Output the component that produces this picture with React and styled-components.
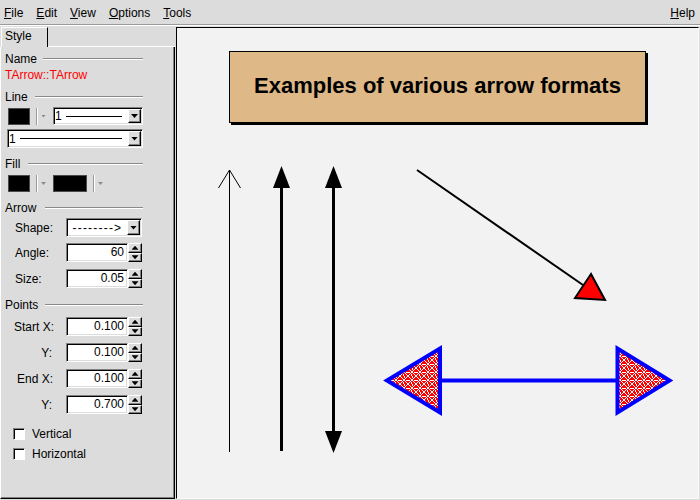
import React from "react";
import styled, { createGlobalStyle } from "styled-components";

const GlobalStyle = createGlobalStyle`
  html, body {
    margin: 0;
    padding: 0;
  }
  body {
    width: 700px;
    height: 500px;
    overflow: hidden;
    background: #dcdcdc;
    font-family: "Liberation Sans", Arial, sans-serif;
    font-size: 12px;
    color: #000;
  }
`;

const Window = styled.div`
  width: 700px;
  height: 500px;
  display: flex;
  flex-direction: column;
  background: #dcdcdc;
`;

const MenuBar = styled.div`
  height: 25px;
  box-sizing: border-box;
  padding: 2px 5px 0 4px;
  display: flex;
  align-items: center;
  gap: 13px;
  line-height: 14px;
  border-bottom: 1px solid #9a9a9a;
  box-shadow: 0 1px 0 #fff;
  margin-bottom: 1px;
  flex: none;
`;

const MenuItem = styled.span`
  margin-left: ${p => (p.$right ? "auto" : "0")};
  u {
    text-decoration: underline;
    text-underline-offset: 1px;
  }
`;

const Body = styled.div`
  flex: 1;
  display: flex;
  min-height: 0;
`;

const SidePanel = styled.div`
  width: 175px;
  flex: none;
  display: flex;
  flex-direction: column;
`;

const TabRow = styled.div`
  height: 21px;
  flex: none;
  display: flex;
  align-items: flex-end;
`;

const Tab = styled.div`
  box-sizing: border-box;
  height: 20px;
  width: 47px;
  margin-left: 1px;
  padding-left: 3px;
  line-height: 16px;
  border-top: 1px solid #fff;
  border-left: 1px solid #fff;
  border-right: 1px solid #000;
`;

const TabFill = styled.div`
  flex: 1;
  height: 1px;
  background: #fff;
`;

const TabBody = styled.div`
  flex: 1;
  margin-bottom: 1px;
  padding: 5px 31px 0 4px;
  border-left: 1px solid #fff;
  border-right: 1px solid #000;
  border-bottom: 1px solid #000;
  box-shadow: inset -1px -1px 0 #808080;
  display: flex;
  flex-direction: column;
`;

const SectionHead = styled.div`
  display: flex;
  align-items: center;
  height: 14px;
  line-height: 14px;
  margin-top: ${p => p.$mt || 0}px;
`;

const Rule = styled.div`
  flex: 1;
  margin-left: ${p => p.$gap}px;
  border-top: 1px solid #8a8a8a;
  border-bottom: 1px solid #fff;
`;

const NameValue = styled.div`
  margin-top: 2px;
  line-height: 14px;
  color: #ff0000;
`;

const ToolRow = styled.div`
  display: flex;
  align-items: center;
  height: ${p => p.$h}px;
  margin-top: ${p => p.$mt}px;
`;

const ColorPickWrap = styled.div`
  display: flex;
  align-items: center;
  margin-left: ${p => p.$ml}px;
`;

const Swatch = styled.div`
  box-sizing: border-box;
  width: ${p => p.$w}px;
  height: 17px;
  background: #000;
  border: 1px solid #4a4a4a;
`;

const VSep = styled.div`
  width: 0;
  height: 17px;
  margin-left: 6px;
  border-left: 1px solid #9a9a9a;
  border-right: 1px solid #fff;
`;

const SmallTri = styled.div`
  width: 5px;
  height: 3px;
  margin-left: 3px;
  background: #8c8c8c;
  clip-path: polygon(0 0, 100% 0, 50% 100%);
`;

const Sunken = styled.div`
  box-sizing: border-box;
  background: #fff;
  border: 1px solid;
  border-color: #808080 #fff #fff #808080;
  box-shadow: inset 1px 1px 0 #000, inset -1px -1px 0 #dcdcdc;
`;

const Combo = styled(Sunken)`
  display: flex;
  align-items: stretch;
  height: ${p => p.$h}px;
  flex: ${p => (p.$w ? "none" : "1")};
  width: ${p => (p.$w ? `${p.$w}px` : "auto")};
  margin-left: ${p => p.$ml || 0}px;
  padding: 1px;
`;

const ComboText = styled.div`
  flex: 1;
  display: flex;
  align-items: center;
  line-height: 14px;
  white-space: pre;
  letter-spacing: ${p => p.$ls || 0}px;
`;

const LineSample = styled.div`
  flex: 1;
  height: 1px;
  background: #000;
  margin: 0 6px 0 4px;
`;

const RaisedBtn = styled.div`
  box-sizing: border-box;
  background: #dcdcdc;
  border-top: 1px solid #fff;
  border-left: 1px solid #fff;
  border-right: 1px solid #000;
  border-bottom: 1px solid #000;
  box-shadow: inset -1px -1px 0 #808080;
  display: flex;
  align-items: center;
  justify-content: center;
`;

const DropBtn = styled(RaisedBtn)`
  width: 13px;
  flex: none;
`;

const Tri = styled.div`
  width: 7px;
  height: 4px;
  background: #000;
  clip-path: ${p =>
    p.$up
      ? "polygon(50% 0, 100% 100%, 0 100%)"
      : "polygon(0 0, 100% 0, 50% 100%)"};
`;

const FormRow = styled.div`
  display: flex;
  align-items: center;
  height: 19px;
  margin-top: ${p => p.$mt}px;
`;

const FieldLabel = styled.div`
  box-sizing: border-box;
  width: 61px;
  flex: none;
  line-height: 14px;
  padding-left: ${p => p.$pl || 0}px;
  padding-right: ${p => p.$pr || 0}px;
  text-align: ${p => (p.$right ? "right" : "left")};
`;

const NumEntry = styled(Sunken)`
  width: 62px;
  height: 19px;
  flex: none;
  padding-right: 3px;
  line-height: 17px;
  text-align: right;
`;

const Spin = styled.div`
  width: 14px;
  height: 19px;
  flex: none;
  display: flex;
  flex-direction: column;
`;

const SpinBtn = styled(RaisedBtn)`
  flex: 1;
`;

const CheckRow = styled.div`
  display: flex;
  align-items: center;
  height: 14px;
  line-height: 14px;
  margin-top: ${p => p.$mt}px;
  padding-left: 8px;
`;

const CheckBox = styled(Sunken)`
  width: 12px;
  height: 12px;
  flex: none;
  box-shadow: inset 1px 1px 0 #000;
`;

const CheckLabel = styled.span`
  margin-left: 7px;
`;

const CanvasFrame = styled.div`
  position: relative;
  flex: 1;
  margin: 1px;
  background: #f2f2f2;
  border-top: 1px solid #000;
  border-left: 1px solid #000;
  border-right: 1px solid #fafafa;
  border-bottom: 1px solid #fafafa;
  overflow: hidden;
`;

const Drawing = styled.svg`
  display: block;
  width: 100%;
  height: 100%;
`;

const TitleBox = styled.div`
  position: absolute;
  left: 52px;
  top: 23px;
  width: 417px;
  height: 72px;
  box-sizing: border-box;
  padding-bottom: 3px;
  background: #deb887;
  border: 1px solid #000;
  box-shadow: 2px 2px 0 #000;
  display: flex;
  align-items: center;
  justify-content: center;
  font-family: "Liberation Sans", Arial, sans-serif;
  font-weight: bold;
  font-size: 22px;
  color: #000;
`;

const ColorPick = ({ w, ml }) => (
  <ColorPickWrap $ml={ml}>
    <Swatch $w={w} />
    <VSep />
    <SmallTri />
  </ColorPickWrap>
);

const LineCombo = ({ h, ml }) => (
  <Combo $h={h} $ml={ml}>
    <ComboText>
      1<LineSample />
    </ComboText>
    <DropBtn>
      <Tri />
    </DropBtn>
  </Combo>
);

const NumberField = ({ value }) => (
  <>
    <NumEntry>{value}</NumEntry>
    <Spin>
      <SpinBtn>
        <Tri $up />
      </SpinBtn>
      <SpinBtn>
        <Tri />
      </SpinBtn>
    </Spin>
  </>
);

const menus = ["File", "Edit", "View", "Options", "Tools"];

const points = [
  { label: "Start X:", pr: 12, value: "0.100", mt: 5 },
  { label: "Y:", pr: 14, value: "0.100", mt: 7 },
  { label: "End X:", pr: 13, value: "0.100", mt: 7 },
  { label: "Y:", pr: 14, value: "0.700", mt: 7 },
];

// white lattice over red, reads like the woven hatch in the picture
const weaveSteps = [0, 1, 2, 3, 4, 5, 6, 7];

export default function App() {
  return (
    <Window>
      <GlobalStyle />
      <MenuBar>
        {menus.map(m => (
          <MenuItem key={m}>
            <u>{m[0]}</u>
            {m.slice(1)}
          </MenuItem>
        ))}
        <MenuItem $right>
          <u>H</u>elp
        </MenuItem>
      </MenuBar>
      <Body>
        <SidePanel>
          <TabRow>
            <Tab>Style</Tab>
            <TabFill />
          </TabRow>
          <TabBody>
            <SectionHead>
              Name
              <Rule $gap={6} />
            </SectionHead>
            <NameValue>TArrow::TArrow</NameValue>

            <SectionHead $mt={8}>
              Line
              <Rule $gap={7} />
            </SectionHead>
            <ToolRow $mt={3} $h={18}>
              <ColorPick w={22} ml={3} />
              <LineCombo h={18} ml={7} />
            </ToolRow>
            <ToolRow $mt={4} $h={19}>
              <LineCombo h={19} ml={2} />
            </ToolRow>

            <SectionHead $mt={9}>
              Fill
              <Rule $gap={8} />
            </SectionHead>
            <ToolRow $mt={4} $h={17}>
              <ColorPick w={22} ml={3} />
              <ColorPick w={34} ml={7} />
            </ToolRow>

            <SectionHead $mt={9}>
              Arrow
              <Rule $gap={9} />
            </SectionHead>
            <FormRow $mt={3}>
              <FieldLabel $pl={10}>Shape:</FieldLabel>
              <Combo $h={19} $w={76}>
                <ComboText $ls={1.2}>{" -------->"}</ComboText>
                <DropBtn>
                  <Tri />
                </DropBtn>
              </Combo>
            </FormRow>
            <FormRow $mt={6}>
              <FieldLabel $pl={10}>Angle:</FieldLabel>
              <NumberField value="60" />
            </FormRow>
            <FormRow $mt={7}>
              <FieldLabel $pl={10}>Size:</FieldLabel>
              <NumberField value="0.05" />
            </FormRow>

            <SectionHead $mt={10}>
              Points
              <Rule $gap={7} />
            </SectionHead>
            {points.map((p, i) => (
              <FormRow key={i} $mt={p.mt}>
                <FieldLabel $right $pr={p.pr}>
                  {p.label}
                </FieldLabel>
                <NumberField value={p.value} />
              </FormRow>
            ))}

            <CheckRow $mt={13}>
              <CheckBox />
              <CheckLabel>Vertical</CheckLabel>
            </CheckRow>
            <CheckRow $mt={6}>
              <CheckBox />
              <CheckLabel>Horizontal</CheckLabel>
            </CheckRow>
          </TabBody>
        </SidePanel>

        <CanvasFrame>
          <Drawing viewBox="177 28 521 470">
            <defs>
              <pattern id="weave" width="8" height="8" patternUnits="userSpaceOnUse">
                <rect width="8" height="8" fill="#ff0000" />
                {weaveSteps.map(i => (
                  <rect key={`a${i}`} x={i} y={i} width="1" height="1" fill="#fff" />
                ))}
                {weaveSteps.map(i => (
                  <rect key={`b${i}`} x={7 - i} y={i} width="1" height="1" fill="#fff" />
                ))}
                <rect x="0" y="4" width="2" height="1" fill="#fff" />
                <rect x="6" y="4" width="2" height="1" fill="#fff" />
                <rect x="4" y="0" width="1" height="2" fill="#fff" />
                <rect x="3" y="6" width="1" height="2" fill="#fff" />
              </pattern>
            </defs>

            {/* thin arrow with open head */}
            <line x1="229.5" y1="170" x2="229.5" y2="452" stroke="#000" strokeWidth="1" shapeRendering="crispEdges" />
            <polyline points="218.5,188 229.5,170 240.5,188" fill="none" stroke="#000" strokeWidth="1" />

            {/* thick arrow, filled head */}
            <line x1="281.5" y1="186" x2="281.5" y2="451" stroke="#000" strokeWidth="3" shapeRendering="crispEdges" />
            <polygon points="281.5,166 273,188 290,188" fill="#000" />

            {/* arrow with heads on both ends */}
            <line x1="333.5" y1="186" x2="333.5" y2="433" stroke="#000" strokeWidth="3" shapeRendering="crispEdges" />
            <polygon points="333.5,166 325,188 342,188" fill="#000" />
            <polygon points="325,431 342,431 333.5,453" fill="#000" />

            {/* diagonal with red head */}
            <line x1="417" y1="170" x2="583" y2="285" stroke="#000" strokeWidth="2" />
            <polygon points="591,274 575,298 605,300" fill="#ff0000" stroke="#000" strokeWidth="2" />

            {/* blue double-headed arrow */}
            <line x1="440" y1="380.5" x2="617.5" y2="380.5" stroke="#0000ff" strokeWidth="4" />
            <polygon points="387,380.5 440,348.5 440,412.5" fill="url(#weave)" stroke="#0000ff" strokeWidth="4" />
            <polygon points="669.5,380.5 617.5,348.5 617.5,412.5" fill="url(#weave)" stroke="#0000ff" strokeWidth="4" />
          </Drawing>
          <TitleBox>Examples of various arrow formats</TitleBox>
        </CanvasFrame>
      </Body>
    </Window>
  );
}
